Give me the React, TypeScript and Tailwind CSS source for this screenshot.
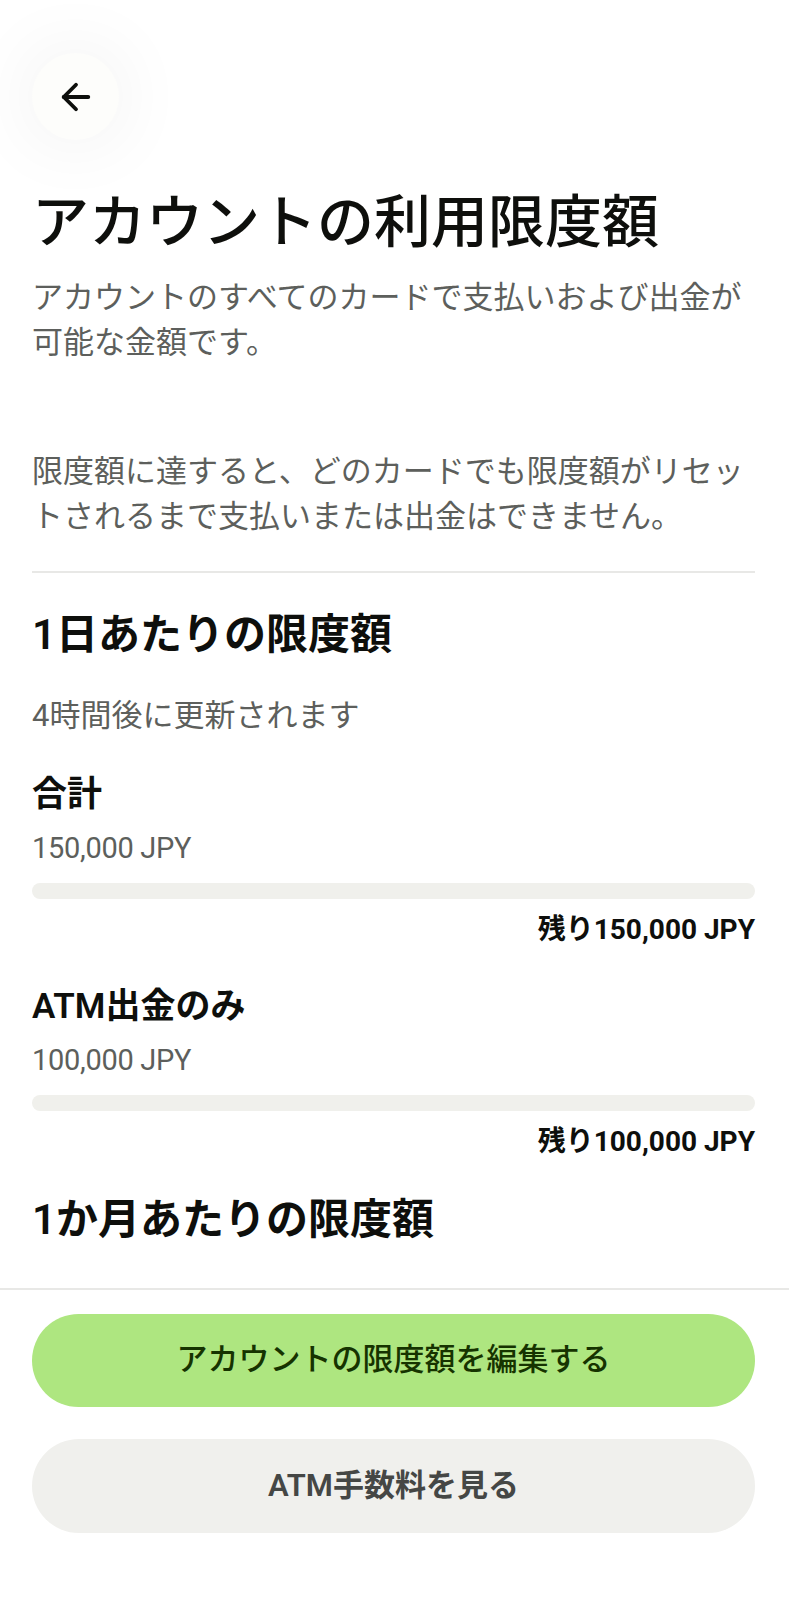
import React from "react";
import { ArrowLeft } from "lucide-react";

type LimitRow = {
  label: string;
  amount: string;
  remaining: string;
  usedPct: number;
};

const dailyLimits: LimitRow[] = [
  { label: "合計", amount: "150,000 JPY", remaining: "残り150,000 JPY", usedPct: 0 },
  { label: "ATM出金のみ", amount: "100,000 JPY", remaining: "残り100,000 JPY", usedPct: 0 },
];

const font = "font-['Roboto','Noto_Sans_CJK_JP',sans-serif]";

const LimitItem = ({ row, first }: { row: LimitRow; first?: boolean }) => (
  <div className={first ? "mt-[37px]" : "mt-[37px]"}>
    <p className="text-[35px] leading-[44px] font-semibold text-[#0e0f0c]">{row.label}</p>
    <p className="mt-[11px] text-[29px] leading-[40px] tracking-[-0.3px] text-[#5d5f5c]">{row.amount}</p>
    <div className="mt-[15px] h-[16px] w-full rounded-full bg-[#f0f0ec] overflow-hidden">
      <div className="h-full rounded-full bg-[#163300]" style={{ width: `${row.usedPct}%` }} />
    </div>
    <p className="mt-[13px] text-right text-[28px] leading-[36px] font-bold text-[#0e0f0c]">
      {row.remaining}
    </p>
  </div>
);

export default function App() {
  return (
    <div className={`${font} h-[1600px] w-full bg-white flex flex-col overflow-hidden`}>
      <div className="flex-1 overflow-hidden px-[32px] pr-[34px]">
        <button className="mt-[53px] flex h-[87px] w-[87px] items-center justify-center rounded-full bg-[#fdfdfb] shadow-[0_0_80px_rgba(0,0,0,0.07)]">
          <ArrowLeft size={42} strokeWidth={2.2} className="text-[#0e0f0c]" />
        </button>

        <h1 className="mt-[49px] text-[57px] leading-[68px] font-medium text-[#0e0f0c]">
          アカウントの利用限度額
        </h1>
        <p className="mt-[18px] text-[31px] leading-[45px] text-[#5d5f5c]">
          アカウントのすべてのカードで支払いおよび出金が可能な金額です。
        </p>
        <p className="mt-[84px] text-[31px] leading-[45px] text-[#5d5f5c]">
          限度額に達すると、どのカードでも限度額がリセットされるまで支払いまたは出金はできません。
        </p>

        <div className="mt-[32px] h-[2px] w-full bg-[#e8e8e6]" />

        <h2 className="mt-[37px] text-[42px] leading-[50px] font-semibold text-[#0e0f0c]">
          1日あたりの限度額
        </h2>
        <p className="mt-[36px] text-[31px] leading-[40px] text-[#5d5f5c]">4時間後に更新されます</p>

        {dailyLimits.map((row, i) => (
          <LimitItem key={row.label} row={row} first={i === 0} />
        ))}

        <h2 className="mt-[35px] text-[42px] leading-[50px] font-semibold text-[#0e0f0c]">
          1か月あたりの限度額
        </h2>
      </div>

      <div className="border-t-2 border-[#e8e8e6] px-[32px] pr-[34px] pt-[24px] pb-[67px] flex flex-col gap-[32px]">
        <button className="h-[93px] w-full rounded-full bg-[#aee680] text-[31px] font-medium text-[#163300]">
          アカウントの限度額を編集する
        </button>
        <button className="h-[94px] w-full rounded-full bg-[#f0f0ed] text-[31px] font-semibold text-[#454745]">
          ATM手数料を見る
        </button>
      </div>
    </div>
  );
}
